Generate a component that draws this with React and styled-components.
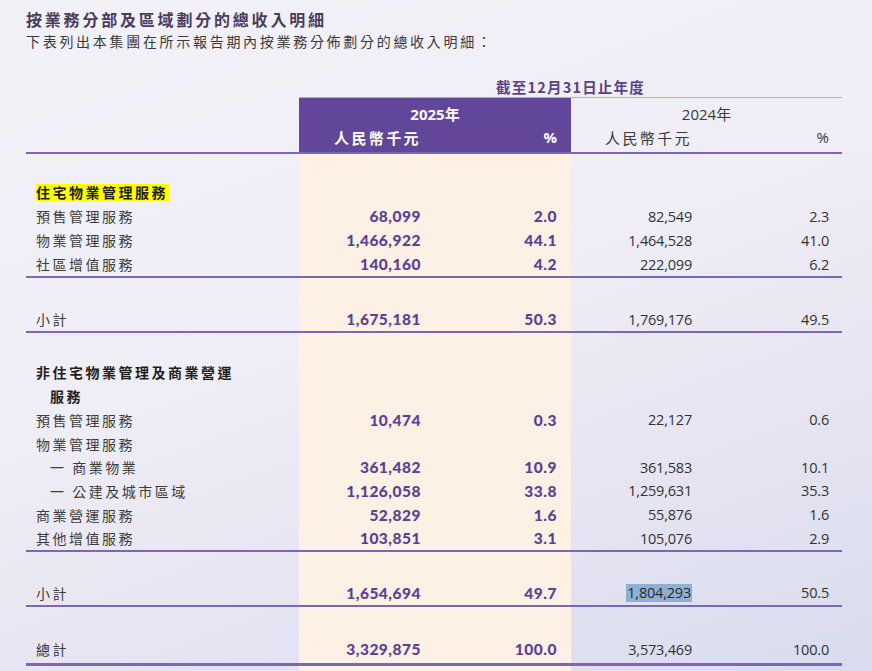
import React from 'react';
import styled, { createGlobalStyle } from 'styled-components';

const COLS = '273px 136px 136px 135px 136px';
const CJK = '"Noto Sans CJK TC", "Noto Sans CJK SC", sans-serif';
const PEACH = '#fdf0e4';
const LINE = '#7d66b3';
const PURPLE = '#62469a';

const Global = createGlobalStyle`
  html, body { margin: 0; padding: 0; }
  html {
    min-height: 100%;
    background: linear-gradient(160deg, #f3f1f8 0%, #efedf5 45%, #e4e3f1 75%, #d8dcee 100%);
  }
  body { min-height: 671px; font-family: ${CJK}; }
`;

const Page = styled.div`
  padding: 8px 0 0 26px;
  width: 816px;
`;

const Title = styled.h1`
  margin: 0;
  font-family: ${CJK};
  font-size: 16px;
  font-weight: 700;
  line-height: 22px;
  letter-spacing: 2.8px;
  color: #4a3c5e;
`;

const Subtitle = styled.p`
  margin: 0;
  font-family: ${CJK};
  font-size: 14px;
  font-weight: 400;
  line-height: 22px;
  letter-spacing: 2.7px;
  color: #3a3a3a;
`;

const Grid = styled.div`
  display: grid;
  grid-template-columns: ${COLS};
`;

const PeriodRow = styled(Grid)`
  margin-top: 23px;
  height: 23px;
`;

const PeriodCell = styled.div`
  grid-column: 2 / span 4;
  display: flex;
  align-items: center;
  justify-content: center;
  border-bottom: 1px solid #b8a8d8;
  font-family: ${CJK};
  font-weight: 700;
  font-size: 14.5px;
  letter-spacing: 1.2px;
  color: #5a4288;
`;

const HeadGrid = styled(Grid)`
  grid-template-rows: 27px 27px;
  border-bottom: 2px solid ${LINE};
`;

const HeadCell = styled.div`
  grid-column: ${p => p.$span ? `span ${p.$span}` : 'auto'};
  display: flex;
  align-items: center;
  justify-content: ${p => p.$center ? 'center' : 'flex-end'};
  padding: ${p => p.$top ? '4px 0 0 0' : '0 0 3px 0'};
  padding-right: ${p => p.$center ? '0' : `${p.$pr || 14}px`};
  background: ${p => p.$purple ? PURPLE : 'transparent'};
  color: ${p => p.$purple ? '#ffffff' : '#3a3a3a'};
  font-family: ${p => p.$num ? '"Open Sans", ' + CJK : CJK};
  font-weight: ${p => p.$purple ? 700 : 400};
  font-size: 15px;
  letter-spacing: ${p => p.$wide ? '2.4px' : '0'};
`;

const Row = styled(Grid)`
  height: ${p => p.$h || 24}px;
  border-bottom: ${p => p.$line ? `${p.$line}px solid ${LINE}` : 'none'};
`;

const Label = styled.div`
  display: flex;
  align-items: center;
  padding-left: ${p => 10 + (p.$indent || 0)}px;
  font-family: ${CJK};
  font-size: 14px;
  font-weight: ${p => p.$bold ? 700 : 400};
  letter-spacing: 2.5px;
  color: ${p => p.$bold ? '#1e1e1e' : '#3c3c3c'};
  white-space: nowrap;
`;

const Mark = styled.span`
  background: #ffff00;
  padding: 0 1px 0 0;
  line-height: 17px;
`;

const Num = styled.div`
  display: flex;
  align-items: center;
  justify-content: flex-end;
  padding-right: ${p => p.$pr || 14}px;
  background: ${p => p.$peach ? PEACH : 'transparent'};
  font-family: ${p => p.$bold ? 'Lato, "Open Sans", sans-serif' : '"Open Sans", sans-serif'};
  font-weight: ${p => p.$bold ? 900 : 400};
  font-size: ${p => p.$bold ? '15.5px' : '14.5px'};
  letter-spacing: ${p => p.$bold ? '0.5px' : '-0.2px'};
  color: ${p => p.$bold ? '#5b3f98' : '#333333'};
`;

const Sel = styled.span`
  background: #8fb0d3;
  color: #2a2a2a;
  padding: 0 1px;
  line-height: 18px;
`;

function DataRow({ label, indent, bold, mark, v = [], h, line, sel }) {
  return (
    <Row $h={h} $line={line}>
      <Label $indent={indent} $bold={bold}>{mark ? <Mark>{label}</Mark> : label}</Label>
      <Num $peach $bold>{v[0]}</Num>
      <Num $peach $bold>{v[1]}</Num>
      <Num>{sel ? <Sel>{v[2]}</Sel> : v[2]}</Num>
      <Num $pr={13}>{v[3]}</Num>
    </Row>
  );
}

const Spacer = ({ h }) => <DataRow h={h} />;

export default function App() {
  return (
    <>
      <Global />
      <Page>
        <Title>按業務分部及區域劃分的總收入明細</Title>
        <Subtitle>下表列出本集團在所示報告期內按業務分佈劃分的總收入明細：</Subtitle>
        <PeriodRow>
          <PeriodCell>截至12月31日止年度</PeriodCell>
        </PeriodRow>
        <HeadGrid>
          <HeadCell $top />
          <HeadCell $top $span={2} $center $purple $num>2025年</HeadCell>
          <HeadCell $top $span={2} $center $num>2024年</HeadCell>
          <HeadCell />
          <HeadCell $purple $wide>人民幣千元</HeadCell>
          <HeadCell $purple $num>%</HeadCell>
          <HeadCell $wide>人民幣千元</HeadCell>
          <HeadCell $num $pr={13}>%</HeadCell>
        </HeadGrid>

        <Spacer h={26} />
        <DataRow label="住宅物業管理服務" bold mark />
        <DataRow label="預售管理服務" v={['68,099', '2.0', '82,549', '2.3']} />
        <DataRow label="物業管理服務" v={['1,466,922', '44.1', '1,464,528', '41.0']} />
        <DataRow label="社區增值服務" v={['140,160', '4.2', '222,099', '6.2']} line={2} />
        <Spacer h={29} />
        <DataRow label="小計" v={['1,675,181', '50.3', '1,769,176', '49.5']} line={2} />
        <Spacer h={27} />
        <DataRow label="非住宅物業管理及商業營運" bold />
        <DataRow label="服務" bold indent={14} />
        <DataRow label="預售管理服務" v={['10,474', '0.3', '22,127', '0.6']} h={23.7} />
        <DataRow label="物業管理服務" h={23.7} />
        <DataRow label="一 商業物業" indent={14} v={['361,482', '10.9', '361,583', '10.1']} h={23.7} />
        <DataRow label="一 公建及城市區域" indent={14} v={['1,126,058', '33.8', '1,259,631', '35.3']} h={23.7} />
        <DataRow label="商業營運服務" v={['52,829', '1.6', '55,876', '1.6']} h={23.7} />
        <DataRow label="其他增值服務" v={['103,851', '3.1', '105,076', '2.9']} h={23.7} line={2} />
        <Spacer h={28} />
        <DataRow label="小計" v={['1,654,694', '49.7', '1,804,293', '50.5']} line={2} sel h={25} />
        <Spacer h={28} />
        <DataRow label="總計" v={['3,329,875', '100.0', '3,573,469', '100.0']} line={3} h={28} />
        <Spacer h={10} />
      </Page>
    </>
  );
}
